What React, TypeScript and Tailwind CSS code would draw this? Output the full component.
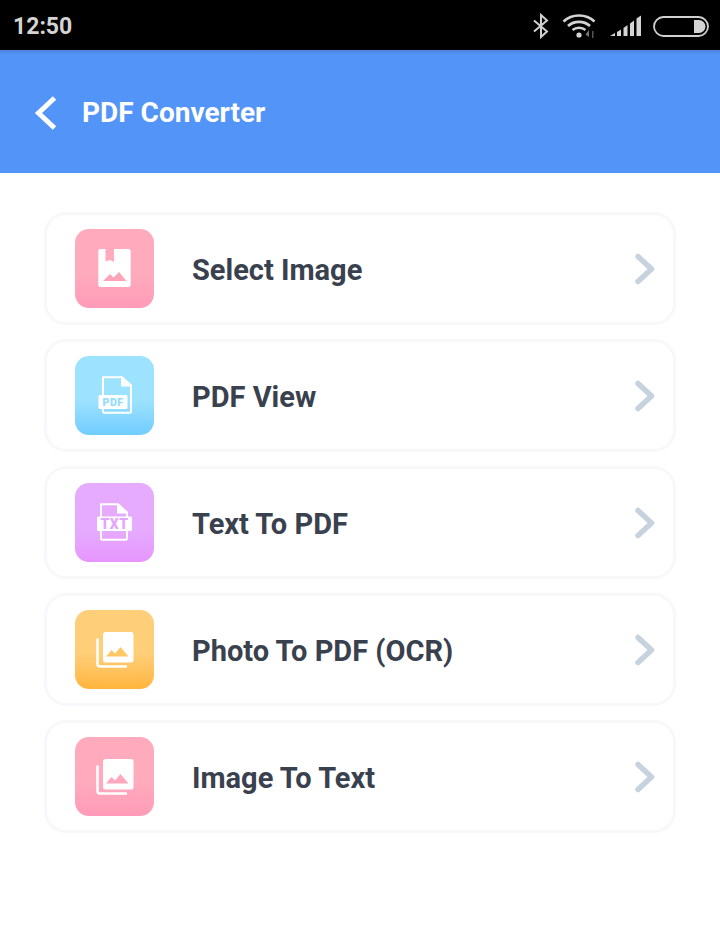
import React from "react";

function Mountains({ fill }: { fill: string }) {
  return <path d="M31 46.5l5.5-6.5 3.5 3.5 5.5-6.5 8 9.5z" fill={fill} />;
}

function Bookmark() {
  return (
    <svg viewBox="0 0 79 79" className="w-full h-full">
      <path
        fillRule="evenodd"
        fill="#fff"
        d="M25.5 20H30.5V32.5L35 31L39 33V20H53.5A2.2 2.2 0 0 1 55.7 22.2V55.8A2.2 2.2 0 0 1 53.5 58H25.5A2.2 2.2 0 0 1 23.3 55.8V22.2A2.2 2.2 0 0 1 25.5 20Z"
      />
      <path d="M28 52l7-7 3.5 3.5L44 43l7.5 9z" fill="#ffa3ba" />
    </svg>
  );
}

function FileIcon({ label, color, rx, ry, rw, rh, tx, ty, size, fx, fw }: { label: string; color: string; rx: number; ry: number; rw: number; rh: number; tx: number; ty: number; size: number; fx: number; fw: number }) {
  return (
    <svg viewBox="0 0 79 79" className="w-full h-full">
      <path
        d={`M${fx + 1} 21.2H${fx + fw - 10}L${fx + fw - 1} 30V55.5A1.3 1.3 0 0 1 ${fx + fw - 2.3} 56.8H${fx + 2.3}A1.3 1.3 0 0 1 ${fx + 1} 55.5Z`}
        fill="none"
        stroke="#fff"
        strokeWidth="2"
        strokeLinejoin="round"
      />
      <path d={`M${fx + fw - 11} 21V30.5H${fx + fw}V29L${fx + fw - 9} 21Z`} fill="#fff" />
      <rect x={rx} y={ry} width={rw} height={rh} rx="1.5" fill="#fff" />
      <text x={tx} y={ty} fontFamily="Roboto, sans-serif" fontWeight="900" fontSize={size} fill={color} textAnchor="middle" letterSpacing="0.5">
        {label}
      </text>
    </svg>
  );
}

function Photos({ fill }: { fill: string }) {
  return (
    <svg viewBox="0 0 79 79" className="w-full h-full">
      <path d="M22.5 28.5V54A2.5 2.5 0 0 0 25 56.5H52" fill="none" stroke="#fff" strokeWidth="2.6" />
      <rect x="28" y="22" width="30.5" height="30.5" rx="2.5" fill="#fff" />
      <Mountains fill={fill} />
    </svg>
  );
}

function Chevron() {
  return (
    <svg viewBox="0 0 20 32" className="w-[20px] h-[32px]">
      <path d="M3 3.5L16.5 16L3 28.5" fill="none" stroke="#c6d2dd" strokeWidth="5.5" strokeLinecap="round" strokeLinejoin="round" />
    </svg>
  );
}

const rows = [
  { title: "Select Image", grad: "bg-gradient-to-b from-[#ffabbd] via-[#ffabbd] via-[55%] to-[#ff9bb8]", icon: <Bookmark /> },
  {
    title: "PDF View",
    grad: "bg-gradient-to-b from-[#9de2ff] via-[#9de2ff] via-[55%] to-[#70cdff]",
    icon: <FileIcon label="PDF" color="#93dcff" fx={27} fw={30} rx={23.5} ry={39} rw={29} rh={14} tx={38} ty={49.5} size={10.5} />,
  },
  {
    title: "Text To PDF",
    grad: "bg-gradient-to-b from-[#e6abff] via-[#e6abff] via-[60%] to-[#e695fd]",
    icon: <FileIcon label="TXT" color="#e4a5fd" fx={25} fw={28} rx={22} ry={33.5} rw={35} rh={14.5} tx={39.5} ty={45.7} size={14} />,
  },
  { title: "Photo To PDF (OCR)", grad: "bg-gradient-to-b from-[#ffce78] via-[#ffce78] via-[55%] to-[#ffb53a]", icon: <Photos fill="#ffc766" /> },
  { title: "Image To Text", grad: "bg-gradient-to-b from-[#ffabbd] via-[#ffabbd] via-[55%] to-[#ff9bb8]", icon: <Photos fill="#ffa8bc" /> },
];

export default function App() {
  return (
    <div className="w-[720px] h-[935px] bg-white flex flex-col font-['Roboto',sans-serif]">
      <div className="h-[50px] bg-black flex items-center justify-between pl-[13px] pr-[11px] pt-[2px] shrink-0">
        <span className="text-[23px] font-bold text-[#d4d4d4] leading-none">12:50</span>
        <div className="flex items-center">
          <svg viewBox="0 0 20 26" className="w-[20px] h-[26px] mr-[11px]">
            <path d="M3 7.5L16 18.5L10 24V2L16 7.5L3 18.5" fill="none" stroke="#d0d0d0" strokeWidth="2" />
          </svg>
          <svg viewBox="0 0 36 26" className="w-[36px] h-[26px] mr-[12px]">
            <path d="M1.5 8.5C10 0.5 24 0.5 32.5 8.5" fill="none" stroke="#d4d4d4" strokeWidth="2.6" />
            <path d="M6 13C12 7.5 22 7.5 28 13" fill="none" stroke="#d4d4d4" strokeWidth="2.6" />
            <path d="M10.5 17C14 14 20 14 23.5 17" fill="none" stroke="#d4d4d4" strokeWidth="2.4" />
            <circle cx="17" cy="22" r="2.6" fill="#d4d4d4" />
            <path d="M27 24L27 17L23.5 21.5Z" fill="#777" />
            <rect x="30" y="18" width="1.5" height="7" fill="#555" />
          </svg>
          <svg viewBox="0 0 31 22" className="w-[31px] h-[22px] mr-[12px]">
            <path d="M0 21L5 18V21Z" fill="#d4d4d4" />
            <path d="M7 17L11 14.5V21H7Z" fill="#d4d4d4" />
            <path d="M13.5 13L17.5 10V21H13.5Z" fill="#d4d4d4" />
            <path d="M20 8.5L24 5.5V21H20Z" fill="#d4d4d4" />
            <path d="M26.5 3.5L31 0.5V21H26.5Z" fill="#d4d4d4" />
          </svg>
          <svg viewBox="0 0 56 21" className="w-[56px] h-[21px]">
            <rect x="1" y="1" width="54" height="19" rx="9.5" fill="none" stroke="#d0d0d0" strokeWidth="1.8" />
            <path d="M41 4H46A6.5 6.5 0 0 1 46 17H41Z" fill="#d4d4d4" />
          </svg>
        </div>
      </div>
      <div className="h-[123px] bg-gradient-to-b from-[#4a85df] to-[#5294f7] to-[5px] flex items-center pl-[34px] pt-[2px] shrink-0">
        <svg viewBox="0 0 24 36" className="w-[24px] h-[36px] mr-[24px]">
          <path d="M20.5 3L4.5 18L20.5 33" fill="none" stroke="#fff" strokeWidth="5" />
        </svg>
        <span className="text-[28px] font-bold text-white leading-none">PDF Converter</span>
      </div>
      <div className="flex flex-col gap-[14px] pt-[39px] px-[44px]">
        {rows.map((r) => (
          <div key={r.title} className="h-[113px] border-[3px] border-[#f8f8fa] rounded-[22px] flex items-center pl-[28px] pr-[18px]">
            <div className={`w-[79px] h-[79px] rounded-[14px] overflow-hidden shrink-0 ${r.grad}`}>{r.icon}</div>
            <span className="ml-[38px] pt-[4px] flex-1 text-[29px] font-bold text-[#3a414e] leading-none">{r.title}</span>
            <Chevron />
          </div>
        ))}
      </div>
    </div>
  );
}
